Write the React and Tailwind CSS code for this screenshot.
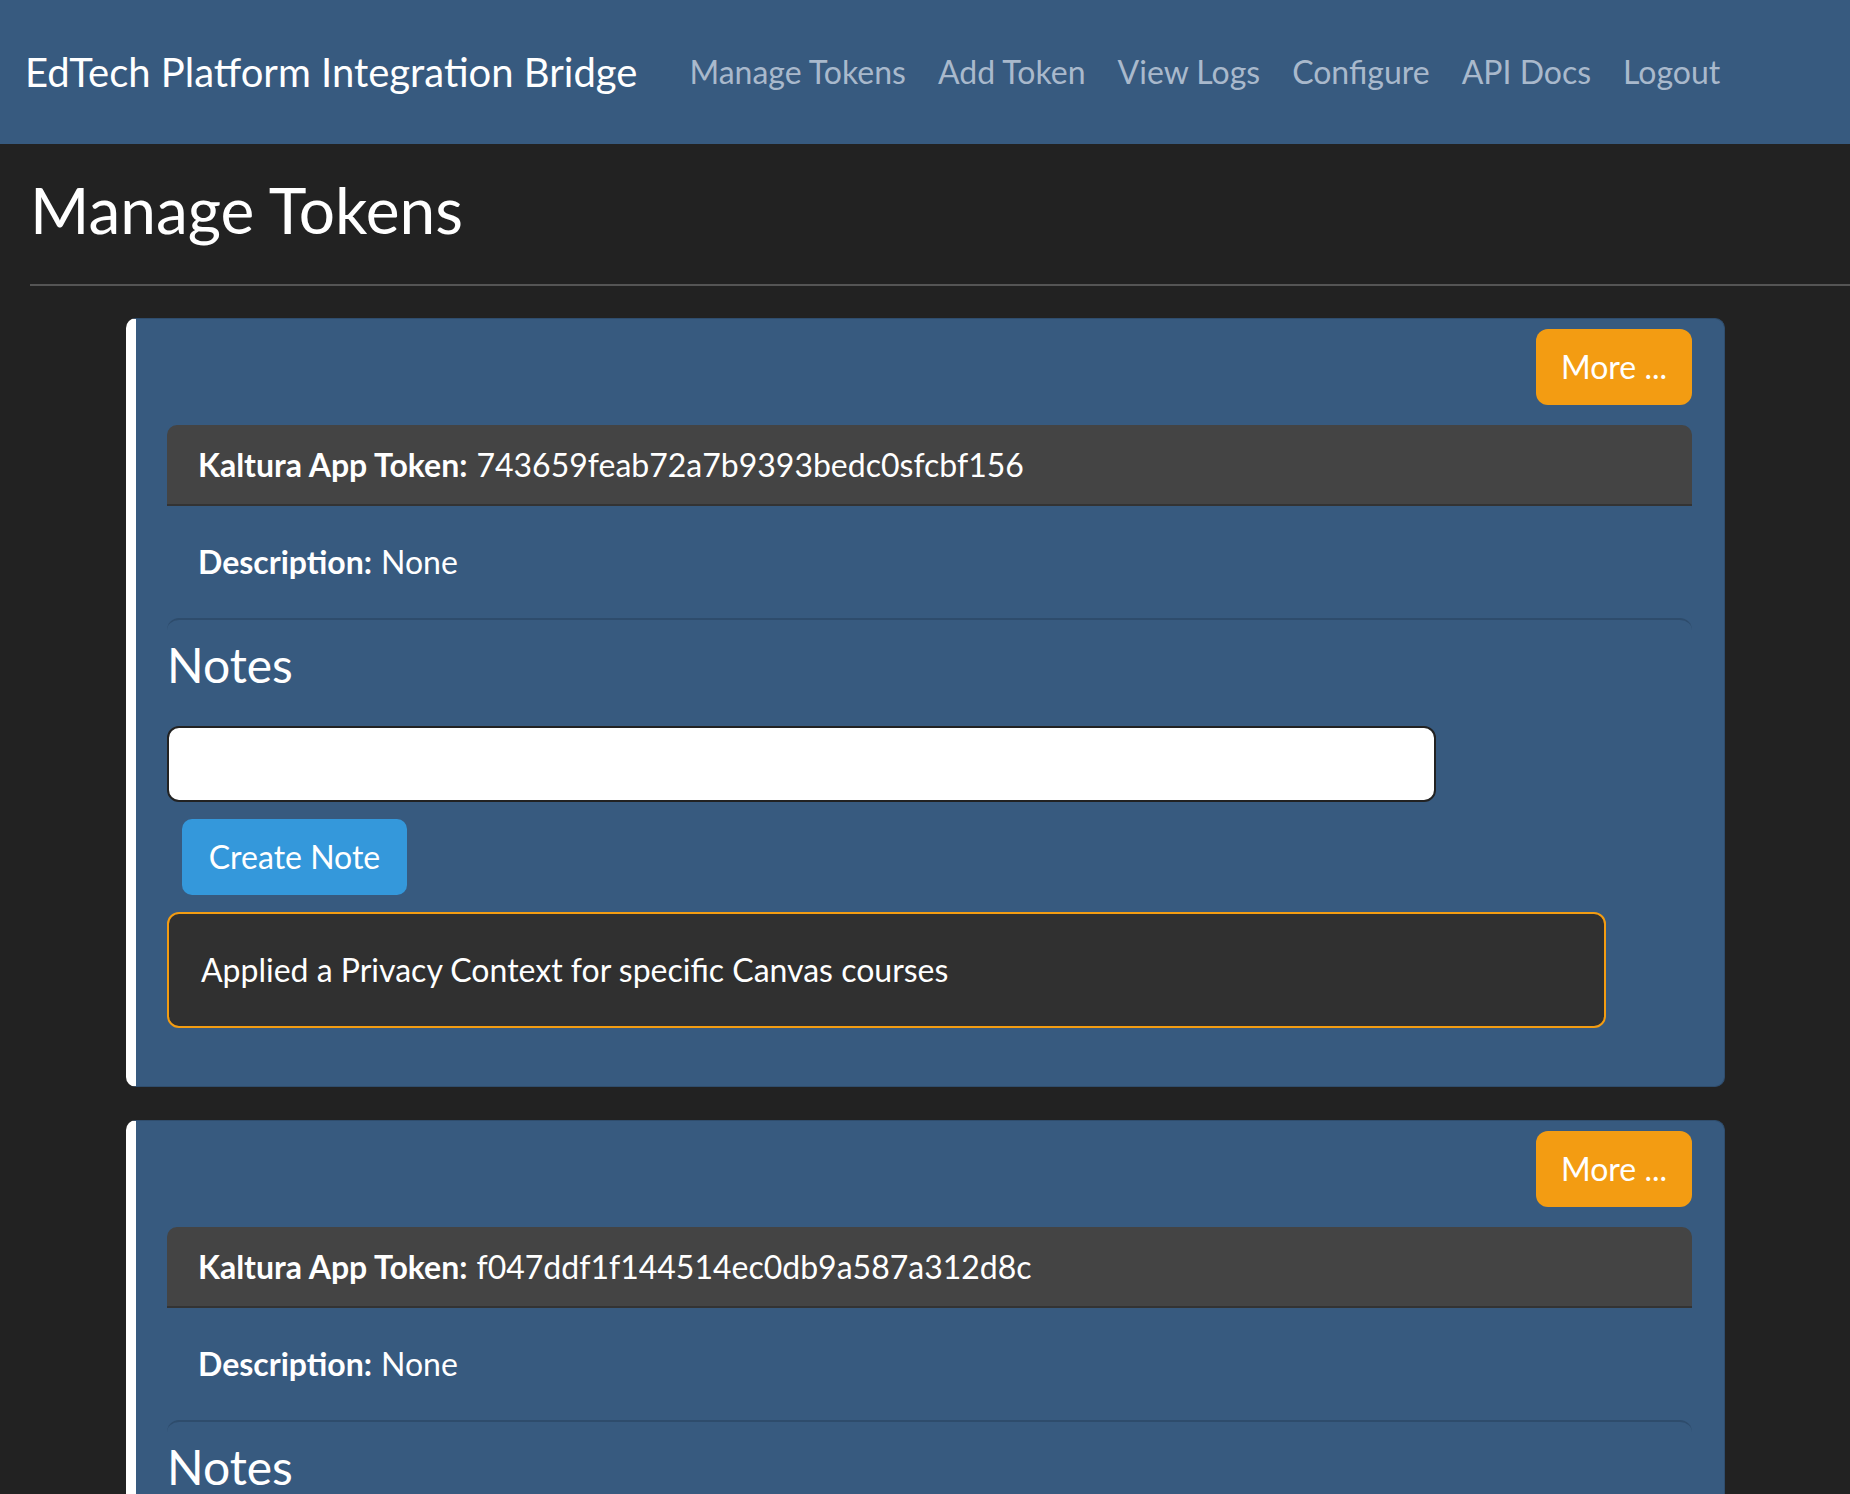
import React from "react"

const tokens = [
  {
    id: 1,
    token: "743659feab72a7b9393bedc0sfcbf156",
    description: "None",
    notes: ["Applied a Privacy Context for specific Canvas courses"],
  },
  {
    id: 2,
    token: "f047ddf1f144514ec0db9a587a312d8c",
    description: "None",
    notes: [],
  },
]

const navLinks = ["Manage Tokens", "Add Token", "View Logs", "Configure", "API Docs", "Logout"]

function TokenCard({ item }) {
  return (
    <div className="bg-[#375a7f] rounded-[10px] border border-[#2f4d6d] border-l-[10px] border-l-white pl-[31px] pr-[32px] pt-[10px] pb-[58px]">
      <div className="flex justify-end">
        <button className="h-[76px] w-[156px] rounded-[12px] bg-[#f39c12] text-white text-[32px]">
          More ...
        </button>
      </div>

      {/* token header */}
      <div className="mt-[20px] bg-[#444444] rounded-t-[10px] border-b-2 border-[#333333] h-[81px] flex items-center pl-[31px] text-[32px] text-white">
        <span className="font-bold mr-[9px]">Kaltura App Token:</span>
        {item.token}
      </div>

      {/* description */}
      <div className="h-[112px] flex items-center pl-[31px] text-[32px] text-white">
        <span className="font-bold mr-[9px]">Description:</span>
        {item.description}
      </div>

      {/* notes */}
      <div className="border-t-2 border-[#2e4c6c] rounded-t-[12px]">
        <h3 className="text-[48px] text-white leading-none pt-[21px]">Notes</h3>
        <input
          type="text"
          className="mt-[37px] block w-[1269px] h-[76px] bg-white border-2 border-[#222222] rounded-[12px] px-4 text-[30px]"
        />
        <button className="mt-[17px] ml-[15px] h-[76px] w-[225px] rounded-[10px] bg-[#3498db] text-white text-[32px]">
          Create Note
        </button>
        <div className="mt-[17px] space-y-4">
          {item.notes.map((n, i) => (
            <div
              key={i}
              className="w-[1439px] h-[116px] bg-[#303030] border-2 border-[#f39c12] rounded-[12px] flex items-center pl-[32px] text-[32px] text-white"
            >
              {n}
            </div>
          ))}
        </div>
      </div>
    </div>
  )
}

export default function App() {
  return (
    <div className="min-h-screen bg-[#222222] font-['Lato',sans-serif] overflow-hidden">
      <nav className="h-[144px] bg-[#375a7f] flex items-center pl-[25px]">
        <div className="text-white text-[40px] mr-[36px]">EdTech Platform Integration Bridge</div>
        <div className="flex">
          {navLinks.map((l) => (
            <a key={l} className="px-[16px] text-[32px] text-[#a9b9cc]">
              {l}
            </a>
          ))}
        </div>
      </nav>

      <div className="pl-[30px]">
        <h1 className="text-white text-[64px] leading-none pt-[34px] pb-[42px]">Manage Tokens</h1>
        <div className="h-[2px] bg-[#555555]"></div>
      </div>

      <div className="pl-[126px] pr-[125px] pt-[32px] space-y-[33px]">
        {tokens.map((t) => (
          <TokenCard key={t.id} item={t} />
        ))}
      </div>
    </div>
  )
}
